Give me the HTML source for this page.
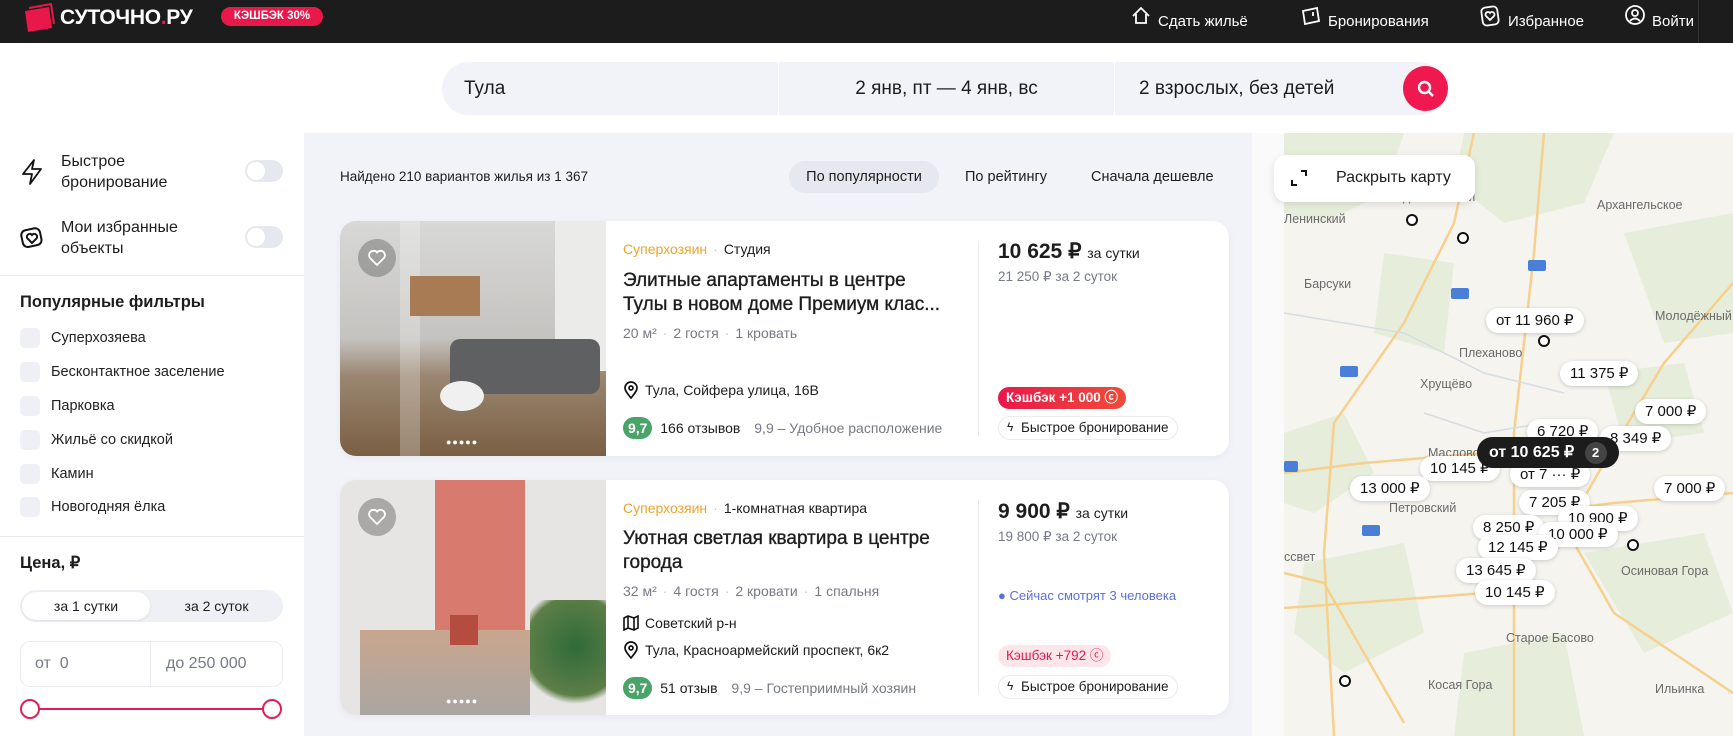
<!DOCTYPE html>
<html><head><meta charset="utf-8"><style>
*{box-sizing:border-box;margin:0;padding:0}
body{width:1733px;height:736px;overflow:hidden;font-family:"Liberation Sans",Arial,sans-serif;color:#1d1d1f;background:#fff;position:relative}
.a{position:absolute;white-space:nowrap}
.hdr{position:absolute;left:0;top:0;width:1733px;height:43px;background:#1c1c1c}
.nav{color:#fff;font-size:15px;top:13px}
.seg{position:absolute;top:62px;height:53px;background:#f2f3f8;font-size:19px;line-height:53px}
.sb{position:absolute;left:0;top:133px;width:304px;height:603px;background:#fff}
.tg{position:absolute;width:38px;height:22px;border-radius:11px;background:#e6e8ef}
.tg:after{content:"";position:absolute;left:2px;top:2px;width:18px;height:18px;border-radius:50%;background:#fff}
.cb{position:absolute;left:20px;width:20px;height:20px;border-radius:5px;background:#eef0f5}
.fl{left:51px;font-size:14.5px;color:#222}
.mid{position:absolute;left:304px;top:133px;width:948px;height:603px;background:#f2f3f8}
.card{position:absolute;left:340px;width:889px;height:235px;background:#fff;border-radius:16px;overflow:hidden;box-shadow:0 2px 8px rgba(0,0,0,.05)}
.gr{color:#767a85}
.dot{color:#c8c8cc;margin:0 6px}
.badge{position:absolute;height:22px;border-radius:11px;font-size:13.5px;line-height:22px;padding:0 8px}
.fast{position:absolute;height:24px;border-radius:12px;border:1px solid #ececf0;font-size:13.5px;line-height:22px;padding:0 8px 0 22px;background:#fff}
.rt{display:inline-block;background:#4aa368;color:#fff;border-radius:11px;padding:0 5px;height:22px;line-height:22px;font-weight:bold;font-size:14px}
.heart{position:absolute;left:18px;top:18px;width:38px;height:38px;border-radius:50%;background:rgba(120,120,120,.55)}
.pt{position:absolute;background:#fff;border-radius:13px;height:25px;line-height:25px;font-size:15px;padding:0 10px;box-shadow:0 1px 4px rgba(0,0,0,.18);white-space:nowrap;color:#111}
.ml{position:absolute;font-size:12.5px;color:#6a6a6a;white-space:nowrap}
.circ{position:absolute;width:12px;height:12px;border:2.5px solid #111;border-radius:50%;background:#fff}
.tt{font-size:19px;line-height:24px;-webkit-text-stroke:0.35px #1d1d1f}
</style></head><body>
<div class="hdr"></div>
<svg class="a" style="left:20px;top:2px" width="38" height="32" viewBox="0 0 38 32"><path d="M5 9 L29 5 L32 26 L8 30 Z" fill="#e8184b"/><path d="M9 6 L31 2 L34 22" fill="none" stroke="#e8184b" stroke-width="2"/></svg>
<div class="a" style="left:60px;top:6px;color:#fff;font-weight:bold;font-size:21px;letter-spacing:-0.3px">СУТОЧНО<span style="color:#e8184b">.</span>РУ</div>
<div class="a" style="left:221px;top:7px;width:102px;height:19px;border-radius:10px;background:#e8184b;color:#fff;font-weight:bold;font-size:11.5px;line-height:19px;text-align:center">КЭШБЭК 30%</div>
<svg class="a" style="left:1130px;top:5px" width="22" height="22" viewBox="0 0 22 22" fill="none" stroke="#fff" stroke-width="1.8"><path d="M3 11 L11 3 L19 11 M6 9 V18 H16 V9"/></svg>
<div class="a nav" style="left:1158px">Сдать жильё</div>
<svg class="a" style="left:1300px;top:5px" width="22" height="22" viewBox="0 0 22 22" fill="none" stroke="#fff" stroke-width="1.8"><path d="M3 6 L17 3 L19 16 L5 19 Z M13 7 V11"/></svg>
<div class="a nav" style="left:1328px">Бронирования</div>
<svg class="a" style="left:1479px;top:4px" width="22" height="24" viewBox="0 0 22 24" fill="none" stroke="#fff" stroke-width="1.8"><rect x="3" y="3" width="16" height="18" rx="4" transform="rotate(-8 11 12)"/><path d="M11 16 L7 12 A2.2 2.2 0 0 1 11 9 A2.2 2.2 0 0 1 15 12 Z"/></svg>
<div class="a nav" style="left:1508px">Избранное</div>
<svg class="a" style="left:1624px;top:4px" width="22" height="22" viewBox="0 0 22 22" fill="none" stroke="#fff" stroke-width="1.8"><circle cx="11" cy="11" r="9"/><circle cx="11" cy="9" r="3"/><path d="M6 17 Q11 12 16 17"/></svg>
<div class="a nav" style="left:1652px">Войти</div>
<div style="position:absolute;left:1698px;top:0;width:1px;height:43px;background:#333"></div>

<div class="seg" style="left:442px;width:336px;border-radius:27px 0 0 27px;padding-left:22px">Тула</div>
<div class="seg" style="left:779px;width:335px;text-align:center">2 янв, пт — 4 янв, вс</div>
<div class="seg" style="left:1115px;width:330px;border-radius:0 27px 27px 0;padding-left:24px">2 взрослых, без детей</div>
<div class="a" style="left:1403px;top:66px;width:45px;height:45px;border-radius:50%;background:#f0194f"></div>
<svg class="a" style="left:1415px;top:78px" width="22" height="22" viewBox="0 0 22 22" fill="none" stroke="#fff" stroke-width="2.4"><circle cx="9.5" cy="9.5" r="5.5"/><path d="M13.5 13.5 L18 18"/></svg>

<div class="sb">
<svg class="a" style="left:20px;top:25px" width="24" height="28" viewBox="0 0 24 28" fill="none" stroke="#111" stroke-width="1.8" stroke-linejoin="round"><path d="M14 2 L3 16 H12 L10 26 L21 11 H12 Z"/></svg>
<div class="a" style="left:61px;top:18px;font-size:16px;line-height:21px;white-space:normal">Быстрое<br>бронирование</div>
<div class="tg" style="left:245px;top:27px"></div>
<svg class="a" style="left:19px;top:92px" width="26" height="26" viewBox="0 0 26 26" fill="none" stroke="#111" stroke-width="2"><rect x="3" y="4" width="19" height="17" rx="5" transform="rotate(-12 13 13)"/><path d="M13 18 L8.5 13.5 A2.5 2.5 0 0 1 13 10 A2.5 2.5 0 0 1 17.5 13.5 Z"/></svg>
<div class="a" style="left:61px;top:84px;font-size:16px;line-height:21px">Мои избранные<br>объекты</div>
<div class="tg" style="left:245px;top:93px"></div>
<div class="a" style="left:0;top:142px;width:304px;height:1px;background:#e8e9ee"></div>
<div class="a" style="left:20px;top:160px;font-size:16.5px;font-weight:bold">Популярные фильтры</div>
<div class="cb" style="top:195px"></div><div class="a fl" style="top:197px">Суперхозяева</div>
<div class="cb" style="top:229px"></div><div class="a fl" style="top:231px">Бесконтактное заселение</div>
<div class="cb" style="top:263px"></div><div class="a fl" style="top:265px">Парковка</div>
<div class="cb" style="top:297px"></div><div class="a fl" style="top:299px">Жильё со скидкой</div>
<div class="cb" style="top:331px"></div><div class="a fl" style="top:333px">Камин</div>
<div class="cb" style="top:364px"></div><div class="a fl" style="top:366px">Новогодняя ёлка</div>
<div class="a" style="left:0;top:403px;width:304px;height:1px;background:#e8e9ee"></div>
<div class="a" style="left:20px;top:420px;font-size:16.5px;font-weight:bold">Цена, ₽</div>
<div class="a" style="left:20px;top:457px;width:263px;height:32px;border-radius:16px;background:#eef0f5"></div>
<div class="a" style="left:22px;top:459px;width:128px;height:28px;border-radius:14px;background:#fff;box-shadow:0 1px 3px rgba(0,0,0,.08);text-align:center;line-height:28px;font-size:14px">за 1 сутки</div>
<div class="a" style="left:150px;top:459px;width:133px;text-align:center;line-height:28px;font-size:14px">за 2 суток</div>
<div class="a" style="left:20px;top:508px;width:263px;height:46px;border:1px solid #ececf0;border-radius:10px"></div>
<div class="a" style="left:150px;top:508px;width:1px;height:46px;background:#ececf0"></div>
<div class="a gr" style="left:35px;top:522px;font-size:16px">от&nbsp; 0</div>
<div class="a gr" style="left:166px;top:522px;font-size:16px">до 250 000</div>
<div class="a" style="left:30px;top:575px;width:242px;height:2px;background:#e01e5a"></div>
<div class="a" style="left:20px;top:566px;width:20px;height:20px;border-radius:50%;border:2px solid #e01e5a;background:#fff"></div>
<div class="a" style="left:262px;top:566px;width:20px;height:20px;border-radius:50%;border:2px solid #e01e5a;background:#fff"></div>
</div>

<div class="mid"></div>
<div class="a" style="left:340px;top:169px;font-size:13.5px">Найдено 210 вариантов жилья из 1 367</div>
<div class="a" style="left:789px;top:161px;width:150px;height:32px;border-radius:16px;background:#e6e8ef;text-align:center;line-height:32px;font-size:14.5px">По популярности</div>
<div class="a" style="left:965px;top:169px;font-size:14.5px">По рейтингу</div>
<div class="a" style="left:1091px;top:169px;font-size:14.5px">Сначала дешевле</div>

<div class="card" style="top:221px">
 <div class="a" style="left:0;top:0;width:266px;height:235px;background:linear-gradient(180deg,#d8d8d6 0%,#c4c3c0 50%,#9a8670 66%,#7a5f43 100%)"></div>
 <div class="a" style="left:60px;top:0;width:20px;height:235px;background:rgba(255,255,255,.25)"></div>
 <div class="a" style="left:70px;top:55px;width:70px;height:40px;background:#a87b55"></div>
 <div class="a" style="left:215px;top:0;width:51px;height:150px;background:#ebebea"></div>
 <div class="a" style="left:110px;top:118px;width:150px;height:55px;border-radius:10px;background:#5f6062"></div>
 <div class="a" style="left:100px;top:160px;width:44px;height:30px;border-radius:50%;background:#f0f0f0"></div>
 <div class="heart"></div>
 <svg class="a" style="left:27px;top:27px" width="20" height="20" viewBox="0 0 20 20" fill="none" stroke="#fff" stroke-width="1.8"><path d="M10 17 L3 10 A4 4 0 0 1 10 4.5 A4 4 0 0 1 17 10 Z"/></svg>
 <div class="a" style="left:106px;top:216px;color:#fff;font-size:9px;letter-spacing:1px">●●●●●</div>
 <div class="a" style="left:283px;top:20px;font-size:14px"><span style="color:#f0a32c">Суперхозяин</span><span class="dot">·</span>Студия</div>
 <div class="a tt" style="left:283px;top:48px">Элитные апартаменты в центре<br>Тулы в новом доме Премиум клас...</div>
 <div class="a gr" style="left:283px;top:104px;font-size:14px">20 м²<span class="dot">·</span>2 гостя<span class="dot">·</span>1 кровать</div>
 <svg class="a" style="left:283px;top:160px" width="16" height="18" viewBox="0 0 16 18" fill="none" stroke="#111" stroke-width="1.7"><path d="M8 17 C3 11 2 9 2 7 A6 6 0 0 1 14 7 C14 9 13 11 8 17Z"/><circle cx="8" cy="7" r="2"/></svg>
 <div class="a" style="left:305px;top:161px;font-size:14px">Тула, Сойфера улица, 16В</div>
 <div class="a" style="left:283px;top:196px;font-size:14px"><span class="rt">9,7</span>&nbsp; 166 отзывов <span class="gr" style="margin-left:10px">9,9 – Удобное расположение</span></div>
 <div class="a" style="left:638px;top:20px;width:1px;height:195px;background:#ececf0"></div>
 <div class="a" style="left:658px;top:18px;font-size:21px;font-weight:bold">10 625 ₽ <span style="font-size:14px;font-weight:500">за сутки</span></div>
 <div class="a gr" style="left:658px;top:48px;font-size:13.5px">21 250 ₽ за 2 суток</div>
 <div class="badge" style="left:658px;top:166px;background:linear-gradient(90deg,#e8184b,#f04b3a);color:#fff;font-weight:bold">Кэшбэк +1 000 ⓒ</div>
 <div class="fast" style="left:658px;top:195px">Быстрое бронирование</div>
 <div class="a" style="left:667px;top:199px;font-size:12px">ϟ</div>
</div>

<div class="card" style="top:480px">
 <div class="a" style="left:0;top:0;width:266px;height:235px;background:#e7e5e3"></div>
 <div class="a" style="left:95px;top:0;width:90px;height:150px;background:#d97a6e"></div>
 <div class="a" style="left:20px;top:150px;width:170px;height:85px;background:linear-gradient(180deg,#c9a68e,#a9a6a2)"></div>
 <div class="a" style="left:110px;top:135px;width:28px;height:30px;background:#b44c3f"></div>
 <div class="a" style="left:190px;top:120px;width:76px;height:115px;background:radial-gradient(circle at 60% 40%,#2f6b3a,#5d7e47 60%,#e7e5e3 70%)"></div>
 <div class="heart"></div>
 <svg class="a" style="left:27px;top:27px" width="20" height="20" viewBox="0 0 20 20" fill="none" stroke="#fff" stroke-width="1.8"><path d="M10 17 L3 10 A4 4 0 0 1 10 4.5 A4 4 0 0 1 17 10 Z"/></svg>
 <div class="a" style="left:106px;top:216px;color:#fff;font-size:9px;letter-spacing:1px">●●●●●</div>
 <div class="a" style="left:283px;top:20px;font-size:14px"><span style="color:#f0a32c">Суперхозяин</span><span class="dot">·</span>1-комнатная квартира</div>
 <div class="a tt" style="left:283px;top:47px">Уютная светлая квартира в центре<br>города</div>
 <div class="a gr" style="left:283px;top:103px;font-size:14px">32 м²<span class="dot">·</span>4 гостя<span class="dot">·</span>2 кровати<span class="dot">·</span>1 спальня</div>
 <svg class="a" style="left:283px;top:135px" width="16" height="16" viewBox="0 0 16 16" fill="none" stroke="#111" stroke-width="1.6"><path d="M1 3 L5 1 L11 3 L15 1 V13 L11 15 L5 13 L1 15 Z M5 1 V13 M11 3 V15"/></svg>
 <div class="a" style="left:305px;top:135px;font-size:14px">Советский р-н</div>
 <svg class="a" style="left:283px;top:161px" width="16" height="18" viewBox="0 0 16 18" fill="none" stroke="#111" stroke-width="1.7"><path d="M8 17 C3 11 2 9 2 7 A6 6 0 0 1 14 7 C14 9 13 11 8 17Z"/><circle cx="8" cy="7" r="2"/></svg>
 <div class="a" style="left:305px;top:162px;font-size:14px">Тула, Красноармейский проспект, 6к2</div>
 <div class="a" style="left:283px;top:197px;font-size:14px"><span class="rt">9,7</span>&nbsp; 51 отзыв <span class="gr" style="margin-left:10px">9,9 – Гостеприимный хозяин</span></div>
 <div class="a" style="left:638px;top:20px;width:1px;height:195px;background:#ececf0"></div>
 <div class="a" style="left:658px;top:19px;font-size:21px;font-weight:bold">9 900 ₽ <span style="font-size:14px;font-weight:500">за сутки</span></div>
 <div class="a gr" style="left:658px;top:49px;font-size:13.5px">19 800 ₽ за 2 суток</div>
 <div class="a" style="left:658px;top:108px;font-size:13px;color:#5b6fd8">● Сейчас смотрят 3 человека</div>
 <div class="badge" style="left:658px;top:165px;background:#fde6ea;color:#e8184b">Кэшбэк +792 ⓒ</div>
 <div class="fast" style="left:658px;top:195px">Быстрое бронирование</div>
 <div class="a" style="left:667px;top:199px;font-size:12px">ϟ</div>
</div>

<div class="a" style="left:1252px;top:133px;width:481px;height:603px;background:#fafafa"></div>
<svg class="a" style="left:1284px;top:133px" width="449" height="603" viewBox="0 0 449 603">
<rect width="449" height="603" fill="#f5f4ef"/>
<g fill="#e6eedb">
<path d="M0 0 H120 L100 60 L40 90 L0 80Z"/><path d="M180 0 H330 L300 70 L220 90 L170 50Z"/><path d="M340 100 L449 80 V200 L380 210Z"/>
<path d="M0 300 L60 280 L90 340 L30 380 L0 370Z"/><path d="M20 430 L120 410 L140 500 L60 540 L10 500Z"/><path d="M300 420 L420 400 L449 480 L360 520Z"/>
<path d="M180 520 L280 500 L300 603 H170Z"/><path d="M100 120 L170 130 L160 220 L90 200Z"/><path d="M320 240 L400 230 L420 300 L340 310Z"/>
</g>
<g fill="none" stroke="#f7d08e" stroke-width="2.5">
<path d="M190 0 L170 90 L120 190 L50 290 L40 420 L50 603"/>
<path d="M0 475 L70 470 L200 460 L240 420"/>
<path d="M0 440 L40 450 L120 590"/>
<path d="M260 0 L250 120 L230 300 L230 603"/>
<path d="M449 150 L380 230 L320 330 L280 400"/>
<path d="M449 360 L330 370 L250 380"/>
<path d="M0 340 L80 330 L200 320 L260 320"/>
<path d="M290 410 L330 480 L449 560"/>
</g>
<g fill="none" stroke="#d6dce3" stroke-width="1.5"><path d="M0 180 L120 200 L200 240 L280 260"/><path d="M140 280 L200 300 L260 290 L320 310"/></g>
<g fill="#4a7fd8"><rect x="244" y="127" width="18" height="11" rx="2"/><rect x="167" y="155" width="18" height="11" rx="2"/><rect x="56" y="233" width="18" height="11" rx="2"/><rect x="78" y="392" width="18" height="11" rx="2"/><rect x="0" y="328" width="14" height="11" rx="2"/></g>
</svg>
<div class="ml" style="left:1403px;top:190px">дественский</div>
<div class="ml" style="left:1597px;top:198px">Архангельское</div>
<div class="ml" style="left:1284px;top:212px">Ленинский</div>
<div class="ml" style="left:1304px;top:277px">Барсуки</div>
<div class="ml" style="left:1459px;top:346px">Плеханово</div>
<div class="ml" style="left:1420px;top:377px">Хрущёво</div>
<div class="ml" style="left:1655px;top:309px">Молодёжный</div>
<div class="ml" style="left:1428px;top:446px">Маслово</div>
<div class="ml" style="left:1389px;top:501px">Петровский</div>
<div class="ml" style="left:1621px;top:564px">Осиновая Гора</div>
<div class="ml" style="left:1506px;top:631px">Старое Басово</div>
<div class="ml" style="left:1428px;top:678px">Косая Гора</div>
<div class="ml" style="left:1655px;top:682px">Ильинка</div>
<div class="ml" style="left:1284px;top:550px">ссвет</div>
<div class="circ" style="left:1406px;top:214px"></div>
<div class="circ" style="left:1457px;top:232px"></div>
<div class="circ" style="left:1538px;top:335px"></div>
<div class="circ" style="left:1339px;top:675px"></div>
<div class="circ" style="left:1627px;top:539px"></div>
<div class="a" style="left:1274px;top:155px;width:201px;height:47px;background:#fff;border-radius:12px;box-shadow:0 2px 8px rgba(0,0,0,.12)"></div>
<svg class="a" style="left:1290px;top:169px" width="18" height="18" viewBox="0 0 18 18" fill="none" stroke="#111" stroke-width="2"><path d="M11 2 H16 V7 M7 16 H2 V11"/></svg>
<div class="a" style="left:1336px;top:169px;font-size:16px">Раскрыть карту</div>
<div class="pt" style="left:1486px;top:308px">от 11 960 ₽</div>
<div class="pt" style="left:1560px;top:361px">11 375 ₽</div>
<div class="pt" style="left:1635px;top:399px">7 000 ₽</div>
<div class="pt" style="left:1527px;top:419px">6 720 ₽</div>
<div class="pt" style="left:1600px;top:426px">8 349 ₽</div>
<div class="pt" style="left:1420px;top:456px">10 145 ₽</div>
<div class="pt" style="left:1350px;top:476px">13 000 ₽</div>
<div class="pt" style="left:1654px;top:476px">7 000 ₽</div>
<div class="pt" style="left:1510px;top:462px">от 7 ··· ₽</div>
<div class="pt" style="left:1519px;top:490px">7 205 ₽</div>
<div class="pt" style="left:1558px;top:506px">10 900 ₽</div>
<div class="pt" style="left:1473px;top:515px">8 250 ₽</div>
<div class="pt" style="left:1538px;top:522px">10 000 ₽</div>
<div class="pt" style="left:1478px;top:535px">12 145 ₽</div>
<div class="pt" style="left:1456px;top:558px">13 645 ₽</div>
<div class="pt" style="left:1475px;top:580px">10 145 ₽</div>
<div class="a" style="left:1477px;top:437px;height:31px;border-radius:16px;background:#1c1c1c;color:#fff;font-size:16px;line-height:31px;padding:0 12px;font-weight:bold">от 10 625 ₽ <span style="display:inline-block;margin-left:6px;width:22px;height:22px;border-radius:50%;background:#444;text-align:center;line-height:22px;font-size:13px">2</span></div>
</body></html>
